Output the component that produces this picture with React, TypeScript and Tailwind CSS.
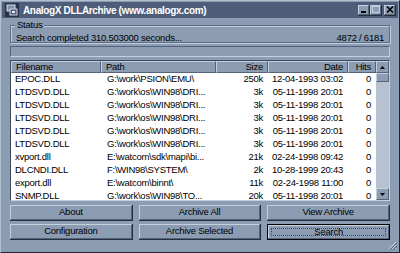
import React from 'react';

// AnalogX DLLArchive main window, Win9x style with a slate colour scheme

type Row = { name: string; path: string; size: string; date: string; hits: string };

const ROWS: Row[] = [
  { name: 'EPOC.DLL', path: 'G:\\work\\PSION\\EMU\\', size: '250k', date: '12-04-1993 03:02', hits: '0' },
  { name: 'LTDSVD.DLL', path: 'G:\\work\\os\\WIN98\\DRI...', size: '3k', date: '05-11-1998 20:01', hits: '0' },
  { name: 'LTDSVD.DLL', path: 'G:\\work\\os\\WIN98\\DRI...', size: '3k', date: '05-11-1998 20:01', hits: '0' },
  { name: 'LTDSVD.DLL', path: 'G:\\work\\os\\WIN98\\DRI...', size: '3k', date: '05-11-1998 20:01', hits: '0' },
  { name: 'LTDSVD.DLL', path: 'G:\\work\\os\\WIN98\\DRI...', size: '3k', date: '05-11-1998 20:01', hits: '0' },
  { name: 'LTDSVD.DLL', path: 'G:\\work\\os\\WIN98\\DRI...', size: '3k', date: '05-11-1998 20:01', hits: '0' },
  { name: 'xvport.dll', path: 'E:\\watcom\\sdk\\mapi\\bi...', size: '21k', date: '02-24-1998 09:42', hits: '0' },
  { name: 'DLCNDI.DLL', path: 'F:\\WIN98\\SYSTEM\\', size: '2k', date: '10-28-1999 20:43', hits: '0' },
  { name: 'export.dll', path: 'E:\\watcom\\binnt\\', size: '11k', date: '02-24-1998 11:00', hits: '0' },
  { name: 'SNMP.DLL', path: 'G:\\work\\os\\WIN98\\TO...', size: '20k', date: '05-11-1998 20:01', hits: '0' },
];

const raised =
  'border border-t-[#c5d0de] border-l-[#c5d0de] border-b-[#56647b] border-r-[#56647b]';

function HeaderCell({ label, w, right }: { label: string; w: string; right?: boolean }) {
  return (
    <div
      className={`${w} ${raised} flex h-full shrink-0 items-center overflow-hidden whitespace-nowrap ${
        right ? 'justify-end pr-[4px]' : 'pl-[4px]'
      }`}
    >
      {label}
    </div>
  );
}

function WinButton({ label, def }: { label: string; def?: boolean }) {
  if (def) {
    return (
      <div className="h-[16px] border border-black">
        <div className={`flex h-full items-center justify-center ${raised} p-[2px]`}>
          <div className="flex h-full w-full items-center justify-center border border-dotted border-[#3a4558]">
            {label}
          </div>
        </div>
      </div>
    );
  }
  return (
    <div className="h-[16px] border-b border-r border-[#243040]">
      <div className={`flex h-full items-center justify-center ${raised}`}>{label}</div>
    </div>
  );
}

function CaptionButton({ kind }: { kind: 'min' | 'max' | 'close' }) {
  return (
    <div className="h-[11px] w-[12px] border-b border-r border-[#243040]">
      <div className={`flex h-full w-full items-center justify-center bg-[#8c9db3] ${raised}`}>
        <svg width="8" height="7" viewBox="0 0 8 7">
          {kind === 'min' && <rect x="1" y="5" width="5" height="2" fill="#000" />}
          {kind === 'max' && (
            <rect x="0.5" y="0.5" width="7" height="6" fill="none" stroke="#c5d0de" strokeWidth="1" />
          )}
          {kind === 'close' && (
            <path d="M1 0.5 L7 6.5 M7 0.5 L1 6.5" stroke="#000" strokeWidth="1.6" />
          )}
        </svg>
      </div>
    </div>
  );
}

export default function App() {
  return (
    <div
      className="flex h-[253px] w-[400px] flex-col border border-t-[#b3c0d0] border-l-[#b3c0d0] border-b-[#1e2633] border-r-[#1e2633] bg-[#8c9db3] p-[1px] text-black"
      style={{ fontFamily: '"Liberation Sans", Arial, sans-serif' }}
    >
      {/* title bar */}
      <div className="flex h-[16px] shrink-0 items-center bg-[#4e5e7a] pl-[3px] pr-[2px]">
        <svg width="14" height="14" viewBox="0 0 14 14" className="shrink-0">
          <rect x="0" y="0" width="14" height="14" fill="#2a3346" />
          <rect x="2" y="2" width="8" height="6" fill="#7f90b0" stroke="#d8e0ea" strokeWidth="1" />
          <rect x="5" y="6" width="7" height="6" fill="#4d5e86" stroke="#c9d3e0" strokeWidth="1" />
          <rect x="7" y="8" width="3" height="2" fill="#e6ecf3" />
        </svg>
        <span className="ml-[4px] whitespace-nowrap text-[10px] font-bold tracking-[-0.35px] text-white">
          AnalogX DLLArchive (www.analogx.com)
        </span>
        <div className="ml-auto flex items-center">
          <CaptionButton kind="min" />
          <CaptionButton kind="max" />
          <div className="ml-[2px]">
            <CaptionButton kind="close" />
          </div>
        </div>
      </div>

      <div className="flex flex-1 flex-col px-[8px] text-[9.5px] tracking-[-0.25px]">
        {/* status group */}
        <fieldset className="mt-[2px] h-[23px] border border-[#5d6c84] shadow-[inset_1px_1px_0_#c3cedc,1px_1px_0_#c3cedc]">
          <legend className="ml-[4px] bg-[#8c9db3] px-[2px] leading-[10px]">Status</legend>
          <div className="flex items-center justify-between px-[5px] pt-[1px]">
            <span>Search completed 310.503000 seconds...</span>
            <span>4872 / 6181</span>
          </div>
        </fieldset>

        {/* progress */}
        <div className="mt-[3px] h-[11px] border border-t-[#56647b] border-l-[#56647b] border-b-[#c5d0de] border-r-[#c5d0de]" />

        {/* list */}
        <div className="mt-[3px] flex h-[141px] border border-t-[#3b475a] border-l-[#3b475a] border-b-[#c5d0de] border-r-[#c5d0de]">
          <div className="flex min-w-0 flex-1 flex-col overflow-hidden bg-white">
            <div className="flex h-[12px] shrink-0 bg-[#8c9db3]">
              <HeaderCell label="Filename" w="w-[90px]" />
              <HeaderCell label="Path" w="w-[115px]" />
              <HeaderCell label="Size" w="w-[52px]" right />
              <HeaderCell label="Date" w="w-[80px]" right />
              <HeaderCell label="Hits" w="w-[28px]" right />
            </div>
            {ROWS.map((r, i) => (
              <div key={i} className="flex h-[13px] shrink-0 items-center whitespace-nowrap">
                <div className="w-[90px] shrink-0 overflow-hidden pl-[4px]">{r.name}</div>
                <div className="w-[115px] shrink-0 overflow-hidden pl-[6px]">{r.path}</div>
                <div className="w-[52px] shrink-0 pr-[5px] text-right">{r.size}</div>
                <div className="w-[80px] shrink-0 pr-[5px] text-right">{r.date}</div>
                <div className="w-[28px] shrink-0 pr-[5px] text-right">{r.hits}</div>
              </div>
            ))}
          </div>
          {/* scrollbar */}
          <div className="flex w-[13px] shrink-0 flex-col bg-[#b6c2d1]">
            <div className={`flex h-[12px] items-center justify-center bg-[#8c9db3] ${raised}`}>
              <svg width="5" height="3" viewBox="0 0 5 3">
                <path d="M2.5 0 L5 3 L0 3 Z" fill="#000" />
              </svg>
            </div>
            <div className={`h-[9px] bg-[#8c9db3] ${raised}`} />
            <div className="flex-1" />
            <div className={`flex h-[12px] items-center justify-center bg-[#8c9db3] ${raised}`}>
              <svg width="5" height="3" viewBox="0 0 5 3">
                <path d="M0 0 L5 0 L2.5 3 Z" fill="#000" />
              </svg>
            </div>
          </div>
        </div>

        {/* buttons */}
        <div className="mt-[4px] grid grid-cols-3 gap-x-[6px] gap-y-[3px]">
          <WinButton label="About" />
          <WinButton label="Archive All" />
          <WinButton label="View Archive" />
          <WinButton label="Configuration" />
          <WinButton label="Archive Selected" />
          <WinButton label="Search" def />
        </div>

        <div className="flex flex-1 items-end justify-end pb-[1px]">
          <svg width="9" height="9" viewBox="0 0 9 9" className="-mr-[7px]">
            <path d="M8 1 L1 8 M8 4 L4 8 M8 7 L7 8" stroke="#c5d0de" strokeWidth="1" />
            <path d="M9 2 L2 9 M9 5 L5 9" stroke="#56647b" strokeWidth="1" />
          </svg>
        </div>
      </div>
    </div>
  );
}
